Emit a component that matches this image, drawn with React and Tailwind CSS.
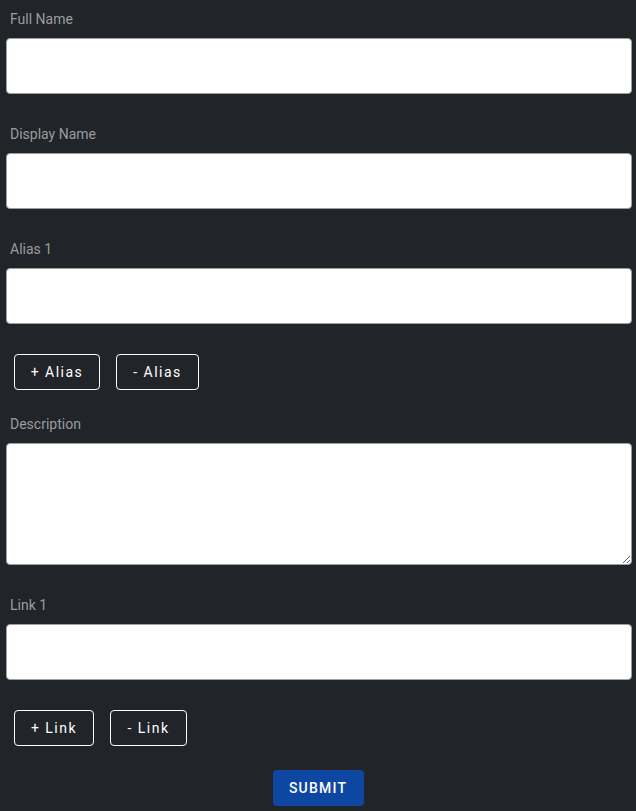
export default function App() {
  const label = "block h-5 leading-5 text-[14px] text-[#9a9ca0] pl-[4px]";
  const input = "block w-full h-[56px] bg-white border border-[#9e9e9e] rounded-[4px] outline-none";
  const btn = "h-9 flex items-center justify-center border border-white rounded-[4px] text-white text-[14px] font-normal tracking-[1.5px]";
  return (
    <div className="min-h-screen bg-[#212429] pl-[6px] pr-[4px] pb-4" style={{ fontFamily: "Roboto, 'Liberation Sans', sans-serif" }}>
      <div className="pt-[9px]">
        <label className={label}>Full Name</label>
        <input className={`${input} mt-[9px]`} />
      </div>
      <div className="pt-[30px]">
        <label className={label}>Display Name</label>
        <input className={`${input} mt-[9px]`} />
      </div>
      <div className="pt-[30px]">
        <label className={label}>Alias 1</label>
        <input className={`${input} mt-[9px]`} />
      </div>
      <div className="pt-[30px] pl-[8px] flex gap-4">
        <button className={`${btn} w-[86px]`}>+ Alias</button>
        <button className={`${btn} w-[83px]`}>- Alias</button>
      </div>
      <div className="pt-[24px]">
        <label className={label}>Description</label>
        <textarea className="block w-full h-[122px] mt-[9px] bg-white border border-[#9e9e9e] rounded-[4px] outline-none" />
      </div>
      <div className="pt-[30px]">
        <label className={label}>Link 1</label>
        <input className={`${input} mt-[9px]`} />
      </div>
      <div className="pt-[30px] pl-[8px] flex gap-4">
        <button className={`${btn} w-[80px]`}>+ Link</button>
        <button className={`${btn} w-[77px]`}>- Link</button>
      </div>
      <div className="pt-[24px] pr-[2px] flex justify-center">
        <button className="h-9 w-[91px] bg-[#0d47a1] rounded-[4px] text-white text-[14px] font-medium tracking-[1.2px] uppercase">Submit</button>
      </div>
    </div>
  );
}
